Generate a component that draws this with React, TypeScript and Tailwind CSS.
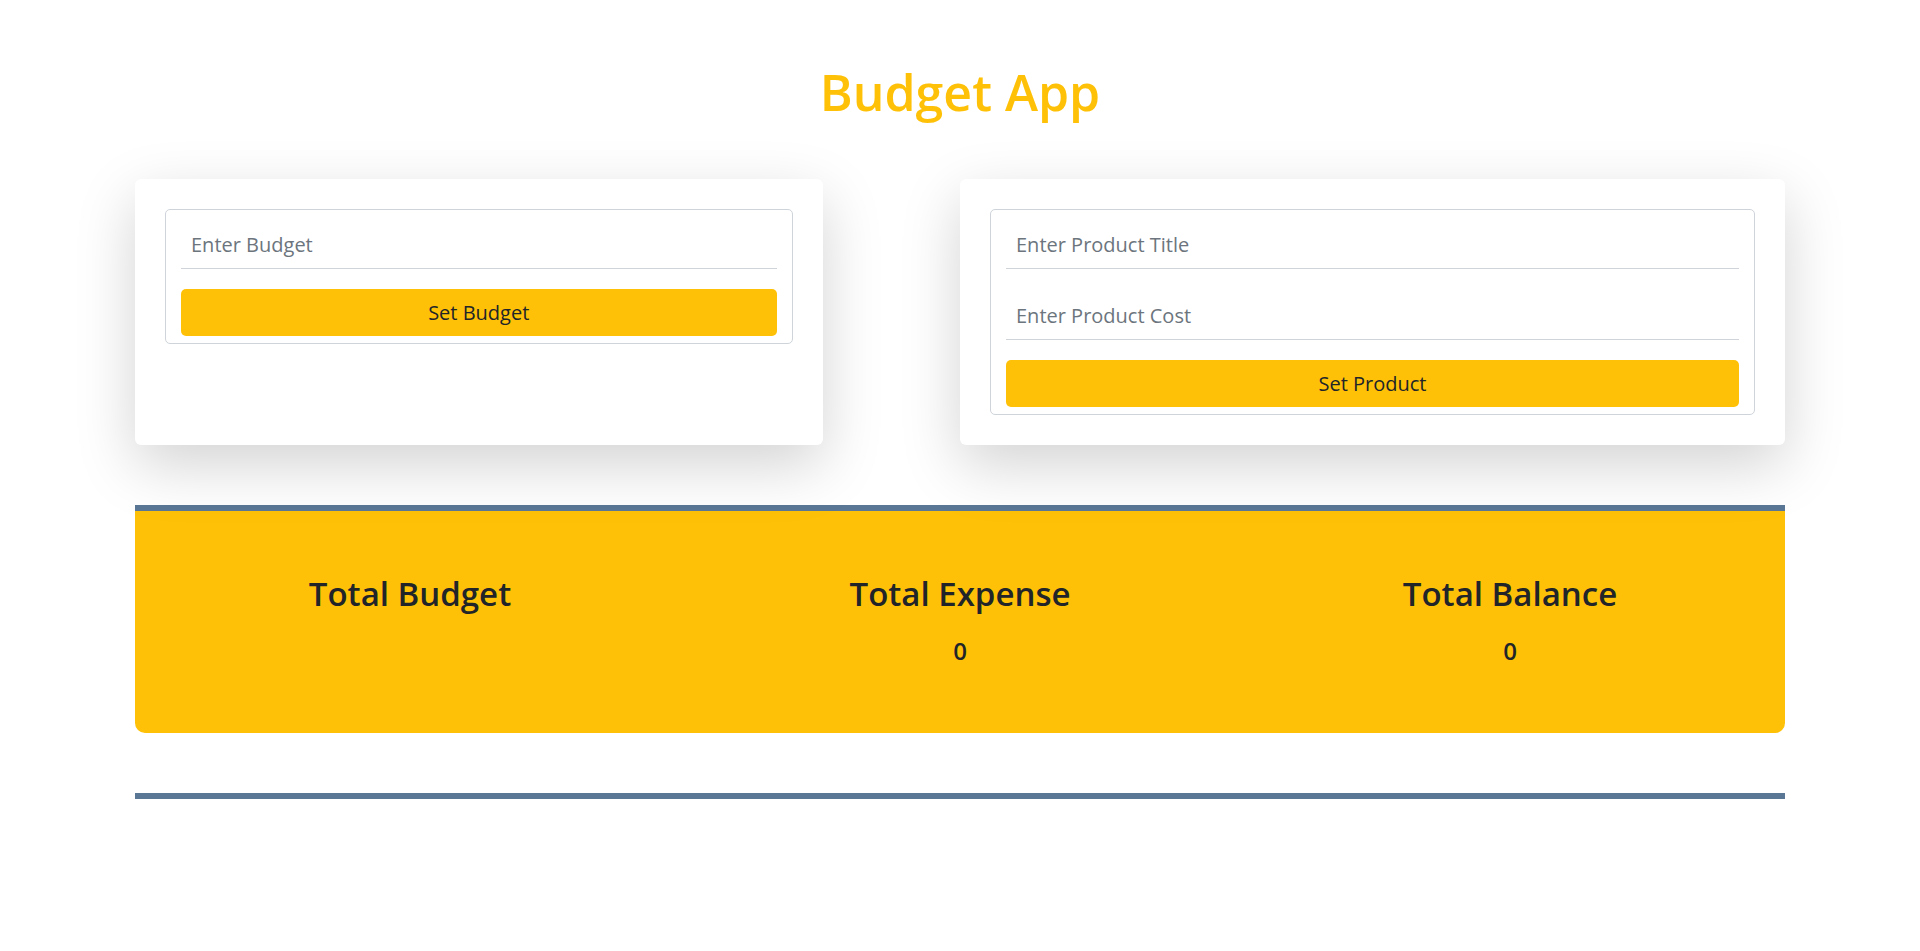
import React from 'react';

function Field({ placeholder, className = '' }: { placeholder: string; className?: string }) {
  return (
    <input
      type="text"
      placeholder={placeholder}
      className={`block w-full h-[44px] px-[10px] pb-[5px] border-b border-[#ced4da] bg-white text-[20px] text-[#212529] placeholder:text-[#6c757d] outline-none ${className}`}
    />
  );
}

function YellowButton({ children }: { children: React.ReactNode }) {
  return (
    <button className="block w-full h-[47px] mt-[20px] rounded-[5px] bg-[#ffc107] text-[20px] text-[#212529] leading-none">
      {children}
    </button>
  );
}

function Stat({ title, value }: { title: string; value?: number }) {
  return (
    <div className="flex flex-col items-center">
      <h3 className="text-[33px] leading-none font-semibold text-[#212529]">{title}</h3>
      {value !== undefined && (
        <h5 className="mt-[29px] text-[24px] leading-none font-semibold text-[#212529]">{value}</h5>
      )}
    </div>
  );
}

export default function App() {
  return (
    <div className="min-h-screen bg-white font-['Open_Sans','Noto_Sans',sans-serif]">
      <div className="w-[1650px] mx-auto pb-[150px]">
        <h1 className="pt-[67px] text-center text-[50px] leading-none font-semibold text-[#ffc107]">
          Budget App
        </h1>

        <div className="grid grid-cols-12 mt-[62px]">
          <div className="col-span-5 p-[30px] bg-white rounded-[6px] shadow-[0_20px_60px_rgba(0,0,0,0.175)]">
            <form
              className="border border-[#ced4da] rounded-[5px] px-[15px] pt-[15px] pb-[7px]"
              onSubmit={(e) => e.preventDefault()}
            >
              <Field placeholder="Enter Budget" />
              <YellowButton>Set Budget</YellowButton>
            </form>
          </div>

          <div className="col-span-6 col-start-7 p-[30px] bg-white rounded-[6px] shadow-[0_20px_60px_rgba(0,0,0,0.175)]">
            <form
              className="border border-[#ced4da] rounded-[5px] px-[15px] pt-[15px] pb-[7px]"
              onSubmit={(e) => e.preventDefault()}
            >
              <Field placeholder="Enter Product Title" />
              <Field placeholder="Enter Product Cost" className="mt-[27px]" />
              <YellowButton>Set Product</YellowButton>
            </form>
          </div>
        </div>

        <div className="mt-[60px] h-[6px] bg-[#5a7896]" />
        <div className="grid grid-cols-3 h-[222px] pt-[66px] bg-[#ffc107] rounded-b-[10px]">
          <Stat title="Total Budget" />
          <Stat title="Total Expense" value={0} />
          <Stat title="Total Balance" value={0} />
        </div>

        <div className="mt-[60px] h-[6px] bg-[#5a7896]" />
      </div>
    </div>
  );
}
